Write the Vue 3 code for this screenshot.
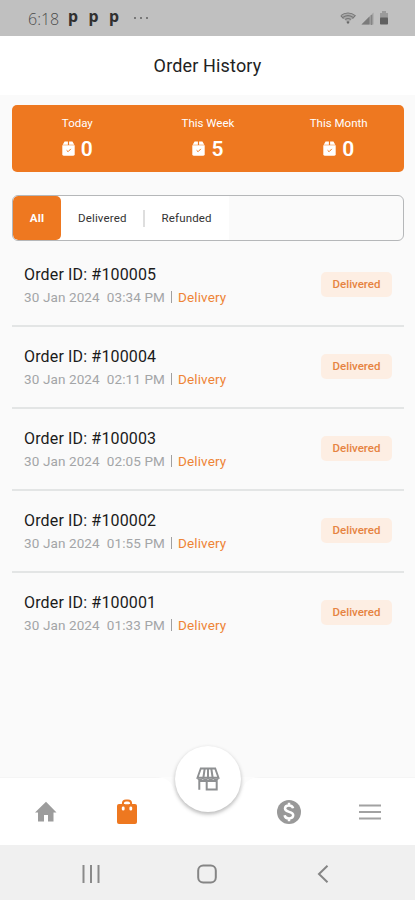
<script setup>
const stats = [
  { label: 'Today', value: 0 },
  { label: 'This Week', value: 5 },
  { label: 'This Month', value: 0 },
]

const orders = [
  { id: '100005', date: '30 Jan 2024', time: '03:34 PM' },
  { id: '100004', date: '30 Jan 2024', time: '02:11 PM' },
  { id: '100003', date: '30 Jan 2024', time: '02:05 PM' },
  { id: '100002', date: '30 Jan 2024', time: '01:55 PM' },
  { id: '100001', date: '30 Jan 2024', time: '01:33 PM' },
]
</script>

<template>
  <div class="screen">
    <div class="status">
      <span class="clock">6:18</span>
      <span class="p">p</span>
      <span class="p">p</span>
      <span class="p">p</span>
      <span class="dots"><i></i><i></i><i></i></span>
      <div class="sys-icons">
        <svg width="16" height="12" viewBox="0 0 16 12">
          <path d="M1 3.6C5 .3 11 .3 15 3.6L8 11.4z" fill="#a8a8a8" />
          <path d="M.8 3.6C5 .2 11 .2 15.2 3.6L12.500 6.600M.8 3.6L3.500 6.600M3.300 5.200c3-2 6.400-2 9.400 0M5.3 7.500c1.700-1.300 3.700-1.300 5.400 0" fill="none" stroke="#757575" stroke-width="1.100" />
          <circle cx="8" cy="10.400" r="1.200" fill="#686868" />
        </svg>
        <svg width="13" height="13" viewBox="0 0 13 13">
          <path d="M12.500.5v12H.5z" fill="#a2a2a2" />
          <path d="M8.500 4.500v8h-8z" fill="#7b7b7b" />
          <path d="M10.500 3v10" stroke="#858585" stroke-width="1.500" />
        </svg>
        <svg width="10" height="14" viewBox="0 0 10 14">
          <path d="M3 0h4v2h2v5H1V2h2z" fill="#9b9b9b" />
          <rect x="1" y="6.500" width="8" height="7" rx=".8" fill="#606060" />
        </svg>
      </div>
    </div>

    <header class="title"><h1>Order History</h1></header>

    <main class="content">
      <section class="stats">
        <div v-for="s in stats" :key="s.label" class="stat">
          <div class="stat-label">{{ s.label }}</div>
          <div class="stat-value">
            <svg width="13" height="15" viewBox="0 0 13 15">
              <path d="M2.600.5h3.300v3.200H.7zM7.100.5h3.300l1.900 3.200H7.100z" fill="#fff" />
              <path d="M.3 4.200h12.400v9.100q0 1.400-1.400 1.400H1.700Q.3 14.700.3 13.300z" fill="#fff" />
              <path d="M4.600 9.300l1.500 1.400 2.700-2.800" fill="none" stroke="#ee7820" stroke-width="1" />
            </svg>
            <span>{{ s.value }}</span>
          </div>
        </div>
      </section>

      <nav class="filters">
        <span class="tab active">All</span>
        <span class="tab delivered">Delivered</span>
        <span class="divider"></span>
        <span class="tab refunded">Refunded</span>
      </nav>

      <section class="orders">
        <article v-for="o in orders" :key="o.id" class="order">
          <div>
            <div class="order-id">Order ID: #{{ o.id }}</div>
            <div class="meta">
              <span class="date">{{ o.date }}</span><span class="time">{{ o.time }}</span><span class="bar"></span><span class="type">Delivery</span>
            </div>
          </div>
          <span class="badge">Delivered</span>
        </article>
      </section>
    </main>

    <footer class="bottom">
      <div class="item">
        <svg width="24" height="24" viewBox="0 0 24 24"><path d="M10 21.500v-6.500h4v6.500h5.500v-9h3L12 1.800 1 12.500h3v9z" fill="#9c9c9c" /></svg>
      </div>
      <div class="item">
        <svg width="22" height="26" viewBox="0 0 22 26">
          <path d="M6.900 6V4.500Q6.900 1.500 10 1.500h2q3.100 0 3.100 3V6" fill="none" stroke="#ee7820" stroke-width="2" />
          <rect x="1" y="5" width="20" height="20" rx="2" fill="#ee7820" />
          <path d="M7.200 8.800v1.400M14.800 8.800v1.400" stroke="#fff" stroke-width="2.800" stroke-linecap="round" />
          <path d="M8.900 4.500h4.200" stroke="#fff" stroke-width="1.500" />
        </svg>
      </div>
      <div class="item"></div>
      <div class="item">
        <svg width="24" height="24" viewBox="0 0 24 24">
          <circle cx="12" cy="12" r="12" fill="#999" />
          <path d="M16.100 8.300C15.700 6.400 14.200 5.500 12 5.500c-2.300 0-4 1.200-4 3.100 0 4.300 8.200 2.200 8.200 6.500 0 2-1.700 3.300-4.200 3.300-2.500 0-4.100-1.200-4.400-3.200M12 2.700V6M12 18v3.300" fill="none" stroke="#fff" stroke-width="2.500" />
        </svg>
      </div>
      <div class="item">
        <svg width="22" height="16" viewBox="0 0 22 16"><path d="M0 1.500h22M0 8h22M0 14.500h22" stroke="#a2a2a2" stroke-width="2.200" /></svg>
      </div>
      <svg class="notch" width="106" height="44" viewBox="0 0 106 44">
        <path d="M0 0H106C96 0 91 4 88 10C82 27 70 38 53 38S24 27 18 10C15 4 10 0 0 0Z" fill="#fcfcfc" />
      </svg>
      <div class="fab">
        <svg width="24" height="24" viewBox="0 0 24 24" fill="none" stroke="#8e9092">
          <path d="M4.800 1.500h14.400l3.300 9.300H1.500z" stroke-width="1.900" />
          <path d="M8.700 1.500l-1.300 9M12 1.500v9M15.300 1.500l1.300 9" stroke-width="2" />
          <path d="M1.500 11.500q2.500 2.200 5.200 0 2.700 2.200 5.300 0 2.600 2.200 5.300 0 2.700 2.200 5.200 0" stroke-width="1.500" />
          <path d="M3.300 12.500v10.200M10.700 14v8.600h10V12.500M10.700 14h10M3.300 14h7.400" stroke-width="2" />
        </svg>
      </div>
    </footer>

    <div class="system">
      <svg width="18" height="18" viewBox="0 0 18 18"><path d="M1.500 0v18M9 0v18M16.500 0v18" stroke="#8a8a8a" stroke-width="2" /></svg>
      <svg class="home-key" width="20" height="20" viewBox="0 0 20 20"><rect x="1.200" y="1.500" width="17.600" height="17" rx="5" fill="none" stroke="#858585" stroke-width="2" /></svg>
      <svg width="12" height="18" viewBox="0 0 12 18"><path d="M10.500.8L2 9l8.500 8.200" fill="none" stroke="#858585" stroke-width="2" /></svg>
    </div>
  </div>
</template>

<style>
body {
  background: #fafafa;
}
</style>

<style scoped>
* {
  box-sizing: border-box;
}

.screen {
  width: 415px;
  height: 900px;
  display: flex;
  flex-direction: column;
  overflow: hidden;
  background: #fafafa;
  font-family: Roboto, sans-serif;
  color: #111;
}

svg {
  display: block;
  flex: none;
}

.status {
  height: 36px;
  flex: none;
  display: flex;
  align-items: center;
  padding: 0 26px 0 28px;
  background: #c0c0c0;
}

.clock {
  width: 40px;
  font: 300 16px 'Open Sans', sans-serif;
  line-height: 36px;
  padding-top: 1px;
  color: #4c4c4c;
}

.p {
  width: 20.5px;
  font: 700 16px 'Noto Sans', sans-serif;
  line-height: 29px;
  margin-top: -3px;
  color: #303030;
}

.dots {
  display: flex;
  gap: 4px;
  margin-left: 4px;
}

.dots i {
  width: 2px;
  height: 2px;
  border-radius: 50%;
  background: #606060;
}

.sys-icons {
  display: flex;
  align-items: center;
  gap: 5px;
  margin-left: auto;
}

.title {
  height: 59px;
  flex: none;
  display: flex;
  align-items: center;
  justify-content: center;
  background: #fff;
}

h1 {
  margin: 0;
  font-size: 18px;
  line-height: 22px;
  font-weight: 400;
  letter-spacing: 0.15px;
  color: #222;
}

.content {
  flex: 1;
  padding: 10px 11px 0 12px;
}

.stats {
  height: 67px;
  display: grid;
  grid-template-columns: repeat(3, 1fr);
  border-radius: 5px;
  background: #ee7820;
  color: #fff;
}

.stat {
  display: flex;
  flex-direction: column;
  align-items: center;
}

.stat-label {
  margin-top: 11px;
  font-size: 11.5px;
  line-height: 15px;
}

.stat-value {
  display: flex;
  align-items: center;
  gap: 6px;
  margin-top: 5px;
  font-size: 21px;
  line-height: 26px;
  font-weight: 600;
}

.stat-value svg {
  margin-top: -1px;
}

.filters {
  height: 46px;
  display: flex;
  align-items: center;
  margin-top: 23px;
  border: 1px solid #b5b7b9;
  border-radius: 6px;
  background: linear-gradient(90deg, #fff 216px, #fafafa 216px);
  font-size: 11.5px;
  overflow: hidden;
}

.tab {
  line-height: 44px;
  letter-spacing: 0.15px;
  color: #333;
}

.active {
  width: 48px;
  text-align: center;
  border-radius: 5px;
  background: #ee7820;
  color: #fff;
  font-weight: 700;
}

.delivered {
  margin-left: 17px;
}

.divider {
  width: 2px;
  height: 17px;
  margin: 0 17px 0 16px;
  background: #dedede;
}

.orders {
  margin-top: 4px;
}

.order {
  height: 82px;
  display: flex;
  justify-content: space-between;
  padding: 20px 12px 0;
  border-bottom: 2px solid #e3e5e5;
}

.order:last-child {
  border-bottom: 0;
}

.order-id {
  font-size: 16px;
  line-height: 20px;
  letter-spacing: 0.15px;
  color: #1b1b1b;
}

.meta {
  display: flex;
  align-items: center;
  margin-top: 3px;
  font-size: 13.5px;
  line-height: 18px;
  letter-spacing: 0.12px;
  color: #a3a5a7;
}

.time {
  margin-left: 7px;
}

.bar {
  width: 1px;
  height: 12px;
  margin: 0 6px 0 6px;
  background: #a0a0a0;
}

.type {
  color: #ee8436;
}

.badge {
  width: 71px;
  height: 25px;
  margin-top: 7px;
  border-radius: 5px;
  background: #fdeee3;
  color: #e68341;
  font-size: 11.5px;
  font-weight: 500;
  line-height: 25px;
  text-align: center;
}

.bottom {
  position: relative;
  height: 67px;
  flex: none;
  display: grid;
  grid-template-columns: repeat(5, 1fr);
  padding: 0 5px 0 6px;
  background: #fff;
  box-shadow: 0 -1px 1px #f5f5f5;
}

.item {
  display: flex;
  align-items: center;
  justify-content: center;
}

.notch {
  position: absolute;
  left: 155px;
  top: -1px;
}

.fab {
  position: absolute;
  left: 175px;
  top: -32px;
  width: 66px;
  height: 66px;
  display: flex;
  align-items: center;
  justify-content: center;
  border-radius: 50%;
  background: #fff;
  box-shadow: 0 2px 4px rgba(0, 0, 0, 0.28);
}

.system {
  height: 55px;
  flex: none;
  display: flex;
  align-items: center;
  justify-content: space-between;
  padding: 2px 86px 0 82px;
  background: #f0f0f0;
}

.home-key {
  margin-right: 4px;
}
</style>
